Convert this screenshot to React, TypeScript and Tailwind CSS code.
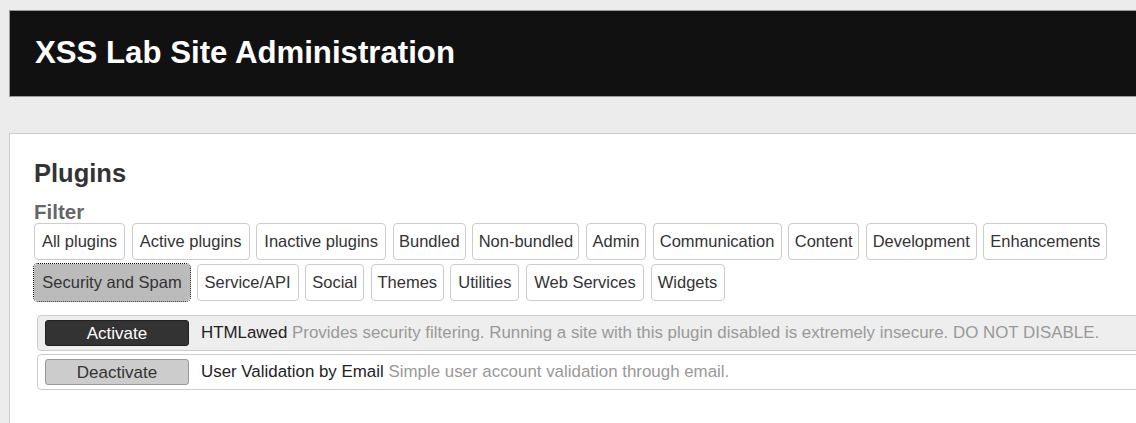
// widths follow the button boxes in the original admin page
const filtersRow1 = [
  { label: 'All plugins', w: 'w-[91px]' },
  { label: 'Active plugins', w: 'w-[118px]' },
  { label: 'Inactive plugins', w: 'w-[130px]' },
  { label: 'Bundled', w: 'w-[73px]' },
  { label: 'Non-bundled', w: 'w-[107px]' },
  { label: 'Admin', w: 'w-[60px]' },
  { label: 'Communication', w: 'w-[129px]' },
  { label: 'Content', w: 'w-[71px]' },
  { label: 'Development', w: 'w-[111px]' },
  { label: 'Enhancements', w: 'w-[124px]' },
]

const filtersRow2 = [
  { label: 'Security and Spam', w: 'w-[156px]' },
  { label: 'Service/API', w: 'w-[102px]' },
  { label: 'Social', w: 'w-[59px]' },
  { label: 'Themes', w: 'w-[73px]' },
  { label: 'Utilities', w: 'w-[69px]' },
  { label: 'Web Services', w: 'w-[118px]' },
  { label: 'Widgets', w: 'w-[74px]' },
]

const plugins = [
  {
    name: 'HTMLawed',
    description: 'Provides security filtering. Running a site with this plugin disabled is extremely insecure. DO NOT DISABLE.',
    active: false,
  },
  {
    name: 'User Validation by Email',
    description: 'Simple user account validation through email.',
    active: true,
  },
]

function FilterButton({ label, w, selected }: { label: string; w: string; selected?: boolean }) {
  return (
    <button
      className={
        w +
        (selected
          ? ' h-[37px] shrink-0 whitespace-nowrap rounded-[4px] border border-[#bbb] bg-[#bbb] text-[16.5px] text-[#333] outline-1 outline-dotted outline-black'
          : ' h-[37px] shrink-0 whitespace-nowrap rounded-[4px] border border-[#ccc] bg-white text-[16.5px] text-[#333]')
      }
    >
      {label}
    </button>
  )
}

export default function App() {
  return (
    <div className="h-[423px] w-full overflow-hidden bg-[#ececec] pt-[10px] font-['Liberation_Sans',Arial,sans-serif]">
      <div className="ml-[9px] flex h-[87px] w-[1200px] items-center border border-[#999] bg-[#111] pl-[25px]">
        <h1 className="text-[31.2px] font-bold text-white">XSS Lab Site Administration</h1>
      </div>

      <div className="ml-[9px] mt-[36px] h-[400px] w-[1200px] border border-[#ccc] bg-white pl-[24px] pt-[24px]">
        <h2 className="text-[25.5px] font-bold leading-[30px] text-[#333]">Plugins</h2>
        <h3 className="mt-[13px] text-[20.5px] font-bold leading-[22px] text-[#666]">Filter</h3>
        <div className="flex flex-col gap-[3.5px]">
          <div className="flex gap-[6.6px]">
            {filtersRow1.map((f) => (
              <FilterButton key={f.label} label={f.label} w={f.w} />
            ))}
          </div>
          <div className="flex gap-[6.6px]">
            {filtersRow2.map((f, i) => (
              <FilterButton key={f.label} label={f.label} w={f.w} selected={i === 0} />
            ))}
          </div>
        </div>

        <ul className="ml-[3px] mt-[14px] flex flex-col gap-[3px]">
          {plugins.map((p) => (
            <li
              key={p.name}
              className={
                'flex h-[36px] items-center rounded-l-[4px] border border-[#ccc] pl-[7px] ' +
                (p.active ? 'bg-white' : 'bg-[#eee]')
              }
            >
              <button
                className={
                  p.active
                    ? 'h-[26px] w-[144px] rounded-[3px] border border-[#999] bg-[#ccc] text-[17px] text-[#333]'
                    : 'h-[26px] w-[144px] rounded-[3px] border border-[#222] bg-[#333] text-[17px] text-white'
                }
              >
                {p.active ? 'Deactivate' : 'Activate'}
              </button>
              <span className="ml-[12px] text-[16.9px] text-[#222]">
                {p.name} <span className="text-[#999]">{p.description}</span>
              </span>
            </li>
          ))}
        </ul>
      </div>
    </div>
  )
}
